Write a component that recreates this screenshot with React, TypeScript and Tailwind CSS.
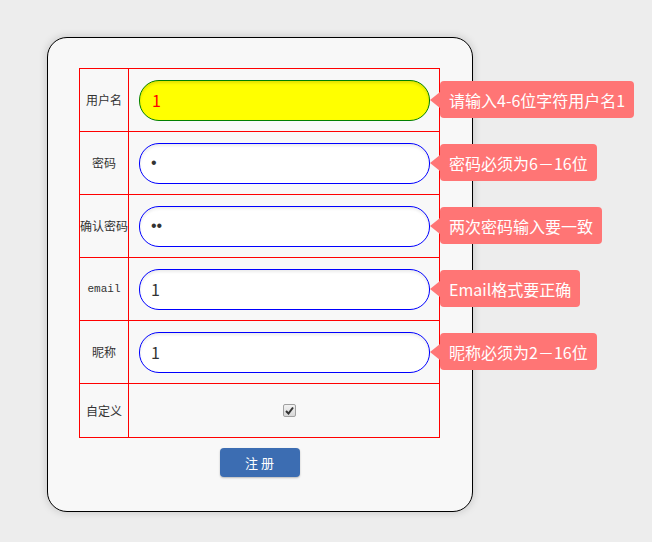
import React from 'react';

const rows = [
  { label: '用户名', type: 'text', value: '1', tip: '请输入4-6位字符用户名1', active: true },
  { label: '密码', type: 'password', value: '1', tip: '密码必须为6－16位' },
  { label: '确认密码', type: 'password', value: '11', tip: '两次密码输入要一致' },
  { label: 'email', type: 'text', value: '1', tip: 'Email格式要正确', mono: true },
  { label: '昵称', type: 'text', value: '1', tip: '昵称必须为2－16位' },
];

const cjk = { fontFamily: '"Noto Sans CJK SC", "Noto Sans", sans-serif' };
const pw = { fontFamily: '"Liberation Sans", Arial, sans-serif' };

function Tip({ text }: { text: string }) {
  return (
    <div
      className="absolute left-[311px] top-[12px] h-[37px] flex items-center px-[9px] rounded-[4px] bg-[#ff7575] text-white text-[16px] whitespace-nowrap z-10"
      style={cjk}
    >
      <span className="absolute left-[-10px] top-1/2 -translate-y-1/2 w-0 h-0 border-y-[8px] border-y-transparent border-r-[10px] border-r-[#ff7575]" />
      {text}
    </div>
  );
}

export default function App() {
  return (
    <div className="min-h-screen bg-[#ededed] pt-[37px] pl-[47px]" style={cjk}>
      <div className="w-[426px] h-[475px] border border-black rounded-[20px] bg-[#f8f8f8] shadow-[0_0_8px_rgba(0,0,0,0.18)] pt-[30px] pl-[31px]">
        <div className="grid grid-cols-[49px_311px] w-[361px] border-l border-t border-[#ff0000]">
          {rows.map((r) => (
            <React.Fragment key={r.label}>
              <div className="h-[63px] border-r border-b border-[#ff0000] flex items-center justify-center text-[#333]">
                {r.mono ? (
                  <span className="text-[11px]" style={{ fontFamily: '"Liberation Mono", monospace' }}>{r.label}</span>
                ) : (
                  <span className="text-[12px]">{r.label}</span>
                )}
              </div>
              <div className="relative h-[63px] border-r border-b border-[#ff0000] flex items-center pl-[10px]">
                <input
                  type={r.type}
                  defaultValue={r.value}
                  autoFocus={r.active}
                  readOnly={!r.active}
                  className={
                    r.active
                      ? 'w-[291px] h-[41px] rounded-[20px] border border-[#008000] bg-[#ffff00] pl-[12px] text-[16px] text-[#ff0000] caret-[#ff0000] outline-none shadow-[inset_0_2px_3px_rgba(0,0,0,0.12)]'
                      : 'w-[291px] h-[41px] rounded-[20px] border border-[#0000ff] bg-white pl-[11px] text-[16px] text-[#333] outline-none shadow-[inset_0_2px_3px_rgba(0,0,0,0.08)]'
                  }
                  style={r.type === 'password' ? pw : cjk}
                />
                <Tip text={r.tip} />
              </div>
            </React.Fragment>
          ))}
          <div className="h-[54px] border-r border-b border-[#ff0000] flex items-center justify-center text-[12px] text-[#333]">
            自定义
          </div>
          <div className="h-[54px] border-r border-b border-[#ff0000] flex items-center justify-center pl-[11px]">
            <span className="w-[13px] h-[13px] rounded-[2px] border border-[#a0a0a0] bg-gradient-to-b from-[#f2f2f2] to-[#d8d8d8] flex items-center justify-center">
              <svg width="9" height="9" viewBox="0 0 9 9">
                <path d="M1 5 L3.5 7.5 L8 1.5" fill="none" stroke="#333" strokeWidth="2" />
              </svg>
            </span>
          </div>
        </div>
        <div className="w-[361px] flex justify-center mt-[10px]">
          <button className="w-[80px] h-[29px] rounded-[4px] bg-[#3c6db2] text-white text-[13px] shadow-[0_1px_2px_rgba(0,0,0,0.25)]">
            注 册
          </button>
        </div>
      </div>
    </div>
  );
}
